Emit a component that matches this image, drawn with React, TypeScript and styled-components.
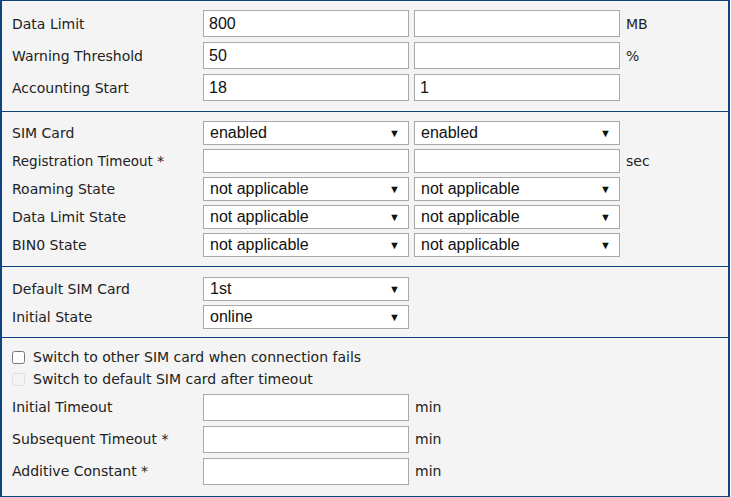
import React from "react";
import styled, { createGlobalStyle } from "styled-components";

const G = createGlobalStyle`
  body { margin: 0; background: #fff; }
`;
const Panel = styled.div`
  width: 726px; background: #f4f4f4;
  border: 2px solid #0f437f; border-bottom: none; border-top-width: 1px;
  font-family: "DejaVu Sans", Verdana, sans-serif; font-size: 14px; color: #222;
`;
const Section = styled.div<{ $pt: number; $pb: number; $gap: number }>`
  display: flex; flex-direction: column; gap: ${p => p.$gap}px;
  padding: ${p => p.$pt}px 0 ${p => p.$pb}px 10px;
  border-bottom: 1px solid #0f437f;
`;
const Row = styled.div<{ $h: number }>`
  display: flex; align-items: center; height: ${p => p.$h}px;
`;
const Label = styled.div<{ $small?: boolean }>`
  width: 191px; font-size: ${p => (p.$small ? "13.5px" : "14px")};
`;
const Input = styled.input<{ $h: number }>`
  box-sizing: border-box; width: 206px; height: ${p => p.$h}px; margin: 0 5px 0 0;
  border: 1px solid #a9a9a9; background: #fff; padding: 0 5px;
  font-family: "Liberation Sans", Arial, sans-serif; font-size: 16px; color: #111;
`;
const Select = styled.div`
  box-sizing: border-box; width: 206px; height: 24px; margin-right: 5px;
  border: 1px solid #a9a9a9; background: #fff; padding: 0 8px 0 6px;
  display: flex; align-items: center; justify-content: space-between;
  font-family: "Liberation Sans", Arial, sans-serif; font-size: 16px; color: #111;
`;
const Arrow = styled.span` font-size: 11px; `;
const Unit = styled.span` margin-left: 1px; font-size: 14px; `;
const Check = styled.label<{ $disabled?: boolean }>`
  display: flex; align-items: center; gap: 8px; height: 22px;
  color: #222;
  input { margin: 0; width: 13px; height: 13px; opacity: ${p => (p.$disabled ? 0.5 : 1)}; }
`;

const Sel = ({ v }: { v: string }) => (
  <Select>{v}<Arrow>▼</Arrow></Select>
);

export default function App() {
  return (
    <>
      <G />
      <Panel>
        <Section $pt={9} $pb={10} $gap={5}>
          <Row $h={27}><Label>Data Limit</Label><Input $h={27} defaultValue="800" /><Input $h={27} /><Unit>MB</Unit></Row>
          <Row $h={27}><Label>Warning Threshold</Label><Input $h={27} defaultValue="50" /><Input $h={27} /><Unit>%</Unit></Row>
          <Row $h={27}><Label>Accounting Start</Label><Input $h={27} defaultValue="18" /><Input $h={27} defaultValue="1" /></Row>
        </Section>
        <Section $pt={9} $pb={9} $gap={4}>
          <Row $h={24}><Label>SIM Card</Label><Sel v="enabled" /><Sel v="enabled" /></Row>
          <Row $h={24}><Label $small>Registration Timeout *</Label><Input $h={24} /><Input $h={24} /><Unit>sec</Unit></Row>
          <Row $h={24}><Label>Roaming State</Label><Sel v="not applicable" /><Sel v="not applicable" /></Row>
          <Row $h={24}><Label>Data Limit State</Label><Sel v="not applicable" /><Sel v="not applicable" /></Row>
          <Row $h={24}><Label>BIN0 State</Label><Sel v="not applicable" /><Sel v="not applicable" /></Row>
        </Section>
        <Section $pt={10} $pb={8} $gap={4}>
          <Row $h={24}><Label>Default SIM Card</Label><Sel v="1st" /></Row>
          <Row $h={24}><Label>Initial State</Label><Sel v="online" /></Row>
        </Section>
        <Section $pt={8} $pb={9} $gap={0}>
          <Check><input type="checkbox" />Switch to other SIM card when connection fails</Check>
          <Check $disabled><input type="checkbox" disabled />Switch to default SIM card after timeout</Check>
          <Row $h={32} style={{ marginTop: 1 }}><Label>Initial Timeout</Label><Input $h={27} /><Unit>min</Unit></Row>
          <Row $h={32}><Label>Subsequent Timeout *</Label><Input $h={27} /><Unit>min</Unit></Row>
          <Row $h={32}><Label>Additive Constant *</Label><Input $h={27} /><Unit>min</Unit></Row>
        </Section>
      </Panel>
    </>
  );
}
